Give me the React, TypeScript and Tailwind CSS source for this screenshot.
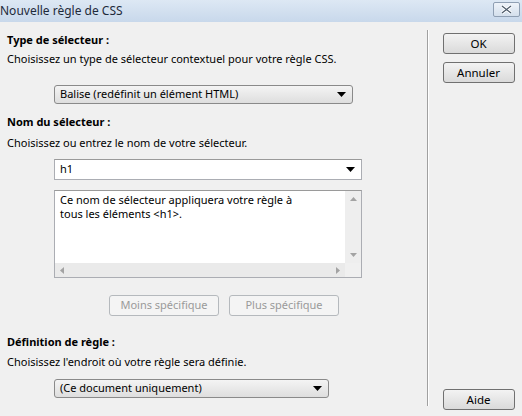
import { ChevronDown } from "lucide-react"

const font = { fontFamily: '"Segoe UI", "Noto Sans", "DejaVu Sans", sans-serif' }

function Arrow() {
  return (
    <svg width="9" height="5" viewBox="0 0 9 5" className="shrink-0">
      <path d="M0 0h9L4.5 5z" fill="#000" />
    </svg>
  )
}

function SmallTri({ dir }: { dir: "up" | "down" | "left" | "right" }) {
  const d = {
    up: "M0 4h7L3.5 0z",
    down: "M0 0h7L3.5 4z",
    left: "M4 0v7L0 3.5z",
    right: "M0 0v7L4 3.5z",
  }[dir]
  const vertical = dir === "up" || dir === "down"
  return (
    <svg width={vertical ? 7 : 4} height={vertical ? 4 : 7} viewBox={vertical ? "0 0 7 4" : "0 0 4 7"}>
      <path d={d} fill="#a3a3a3" />
    </svg>
  )
}

function Select({ label, width }: { label: string; width: string }) {
  return (
    <div
      className={`${width} h-[19px] flex items-center justify-between pl-[5px] pr-[6px] rounded-[3px] border border-[#8a8a8a] bg-gradient-to-b from-[#f4f4f4] to-[#dedede] text-[11px] text-black`}
    >
      <span>{label}</span>
      <Arrow />
    </div>
  )
}

function Button({ label, disabled = false }: { label: string; disabled?: boolean }) {
  return (
    <div
      className={
        disabled
          ? "w-[110px] h-[21px] flex items-center justify-center rounded-[3px] border border-[#b5b9bd] bg-[#f4f4f4] text-[11px] text-[#9a9a9a]"
          : "w-[72px] h-[21px] flex items-center justify-center rounded-[3px] border border-[#707070] bg-gradient-to-b from-[#f3f3f3] to-[#dadada] text-[11.5px] text-black"
      }
    >
      {label}
    </div>
  )
}

export default function App() {
  return (
    <div className="w-[522px] h-[416px] bg-[#f0f0f0] flex flex-col overflow-hidden" style={font}>
      {/* Title bar */}
      <div className="h-[22px] flex items-center justify-between bg-gradient-to-b from-[#dde8f4] to-[#c8d8eb] pr-[2px]">
        <span className="text-[12px] text-[#1e2a3a] leading-none">Nouvelle règle de CSS</span>
        <div className="w-[27px] h-[15px] mb-[3px] flex items-center justify-center rounded-[2px] border border-[#8f9fb3] bg-gradient-to-b from-[#eef3f9] to-[#d4dfec]">
          <svg width="11" height="9" viewBox="0 0 11 9">
            <path d="M1 1l9 7M10 1L1 8" stroke="#ffffff" strokeWidth="3" />
            <path d="M1 1l9 7M10 1L1 8" stroke="#4a5868" strokeWidth="1.2" />
          </svg>
        </div>
      </div>

      <div className="flex flex-1">
        {/* Form */}
        <div className="w-[427px] pl-[7px] pt-[9px] text-[11px] text-black">
          <div className="h-[18px] leading-[18px] font-bold">Type de sélecteur :</div>
          <div className="h-[18px] leading-[18px] mt-[1px]">
            Choisissez un type de sélecteur contextuel pour votre règle CSS.
          </div>
          <div className="mt-[17px] pl-[47px]">
            <Select label="Balise (redéfinit un élément HTML)" width="w-[299px]" />
          </div>

          <div className="h-[18px] leading-[18px] font-bold mt-[9px]">Nom du sélecteur :</div>
          <div className="h-[18px] leading-[18px] mt-[3px]">Choisissez ou entrez le nom de votre sélecteur.</div>

          <div className="mt-[7px] pl-[47px] flex flex-col">
            <div className="w-[308px] h-[21px] flex items-center justify-between pl-[5px] pr-[6px] bg-white border border-[#abadb3] border-t-[#9a9a9a]">
              <span>h1</span>
              <Arrow />
            </div>

            {/* Description box with scrollbars */}
            <div className="mt-[10px] w-[308px] h-[88px] bg-white border border-[#abadb3] border-t-[#9a9a9a] flex">
              <div className="flex-1 flex flex-col">
                <div className="flex-1 pl-[5px] pt-[2px] leading-[14px]">
                  <div>Ce nom de sélecteur appliquera votre règle à</div>
                  <div>tous les éléments &lt;h1&gt;.</div>
                </div>
                <div className="h-[14px] bg-[#eaeaea] flex items-center justify-between px-[5px]">
                  <SmallTri dir="left" />
                  <SmallTri dir="right" />
                </div>
              </div>
              <div className="w-[16px] flex flex-col">
                <div className="flex-1 bg-[#eeeeee] flex flex-col items-center justify-between py-[6px]">
                  <SmallTri dir="up" />
                  <SmallTri dir="down" />
                </div>
                <div className="h-[14px] bg-[#f0f0f0]" />
              </div>
            </div>
          </div>

          <div className="mt-[17px] pl-[102px] flex gap-[10px]">
            <Button label="Moins spécifique" disabled />
            <Button label="Plus spécifique" disabled />
          </div>

          <div className="h-[18px] leading-[18px] font-bold mt-[17px]">Définition de règle :</div>
          <div className="h-[18px] leading-[18px] mt-[2px]">Choisissez l'endroit où votre règle sera définie.</div>
          <div className="mt-[8px] pl-[47px]">
            <Select label="(Ce document uniquement)" width="w-[275px]" />
          </div>
        </div>

        {/* Action buttons */}
        <div className="flex-1 flex pt-[8px] pb-[6px]">
          <div className="w-[1px] bg-[#a0a0a0] border-r border-white box-content mb-[4px]" />
          <div className="flex-1 flex flex-col items-center pl-[13px] pr-[7px] pt-[3px]">
            <Button label="OK" />
            <div className="mt-[8px]">
              <Button label="Annuler" />
            </div>
            <div className="mt-auto">
              <Button label="Aide" />
            </div>
          </div>
        </div>
      </div>
      <ChevronDown className="hidden" />
    </div>
  )
}
